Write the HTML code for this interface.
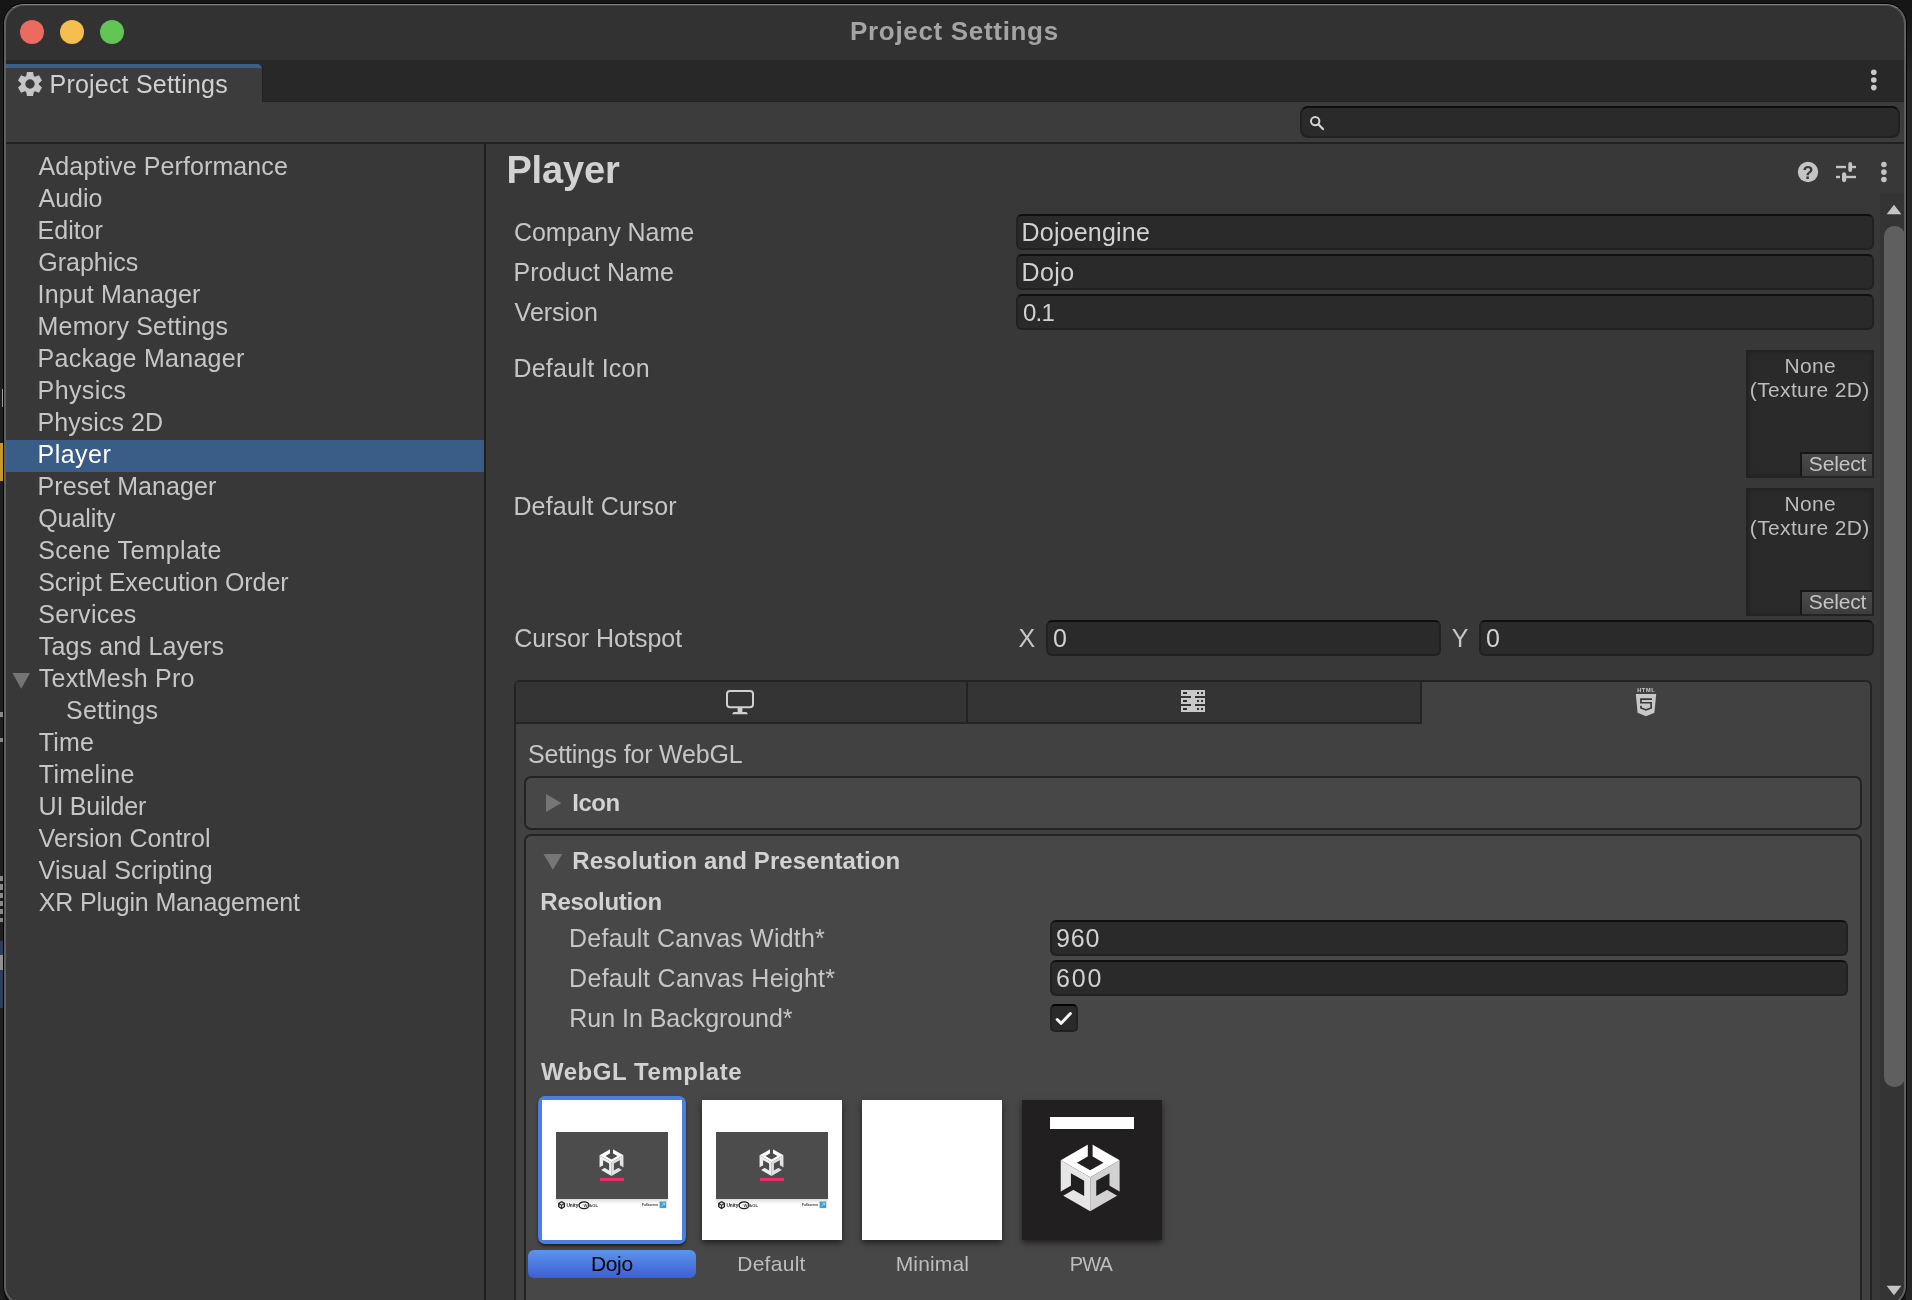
<!DOCTYPE html>
<html><head><meta charset="utf-8"><title>Project Settings</title>
<style>
html,body{margin:0;padding:0}
body{width:1912px;height:1300px;overflow:hidden;position:relative;background:#161616;font-family:"Liberation Sans",sans-serif}
div,svg{position:absolute;box-sizing:border-box}
.t{white-space:nowrap;line-height:32px;height:32px}
#win{left:4px;top:4px;width:1902px;height:1302px;border-radius:20px;overflow:hidden;background:#383838;box-shadow:0 0 0 1px #000}
#in{left:-4px;top:-4px;width:1912px;height:1306px;will-change:transform}
#txt{left:0;top:0;width:1912px;height:1300px;will-change:transform}
#wb{left:4px;top:4px;width:1902px;height:1302px;border-radius:20px;border:2px solid #5f5f5f;border-top:1px solid #828282;box-shadow:inset 0 1px 0 rgba(255,255,255,.11)}
.f{background:#2a2a2a;border:2px solid #212121;border-top-color:#0f0f0f;border-radius:6px}
.tex{background:#2a2a2a;border:2px solid #232323;width:128px;height:128px;box-shadow:inset 0 0 5px rgba(0,0,0,.25)}
.sel{background:linear-gradient(#4a4a4a,#3c3c3c);border:2px solid #171717;border-right:0;border-bottom:0;left:1800px;width:72px;height:24px}
.box{background:#474747;border:2px solid #232323;border-radius:7px}
.sh{box-shadow:0 3px 6px rgba(0,0,0,.55)}

</style></head>
<body>
<!-- outer desktop remnants -->
<div style="left:1906px;top:14px;width:6px;height:1290px;background:linear-gradient(#161616,#252525 60px)"></div>
<div style="left:0;top:30px;width:4px;height:1270px;background:linear-gradient(#161616,#1e1e1e 40px)"></div>
<div style="left:0;top:443px;width:3px;height:38px;background:#c8982e"></div>
<div style="left:2px;top:389px;width:1px;height:18px;background:#a0a0a0"></div>
<div style="left:0;top:712px;width:3px;height:5px;background:#8a8a8a"></div>
<div style="left:0;top:738px;width:3px;height:4px;background:#8a8a8a"></div>
<div style="left:0;top:876px;width:3px;height:5px;background:#8a8a8a"></div>
<div style="left:0;top:884px;width:3px;height:6px;background:#8a8a8a"></div>
<div style="left:0;top:893px;width:3px;height:5px;background:#8a8a8a"></div>
<div style="left:0;top:901px;width:3px;height:5px;background:#8a8a8a"></div>
<div style="left:0;top:909px;width:3px;height:5px;background:#8a8a8a"></div>
<div style="left:0;top:918px;width:3px;height:4px;background:#8a8a8a"></div>
<div style="left:0;top:941px;width:3px;height:67px;background:#2c3e5c"></div>
<div style="left:0;top:955px;width:3px;height:15px;background:#909090"></div>
<div id="win"><div id="in">
<!-- title bar -->
<div style="left:0;top:0;width:1912px;height:60px;background:#323232"></div>
<div style="left:20px;top:20px;width:24px;height:24px;border-radius:50%;background:#ec6b60"></div>
<div style="left:60px;top:20px;width:24px;height:24px;border-radius:50%;background:#f5bf4f"></div>
<div style="left:100px;top:20px;width:24px;height:24px;border-radius:50%;background:#62c655"></div>
<!-- tab bar -->
<div style="left:0;top:60px;width:1912px;height:42px;background:#282828"></div>
<div style="left:4px;top:64px;width:258px;height:40px;background:#3c3c3c;border-top:4px solid #3a5f8c;border-top-right-radius:5px"></div>
<!-- toolbar -->
<div style="left:262px;top:101px;width:1650px;height:1px;background:#222"></div>
<div style="left:262px;top:66px;width:1px;height:36px;background:#1f1f1f"></div>
<div style="left:0;top:102px;width:1912px;height:40px;background:#3c3c3c"></div>
<div style="left:0;top:142px;width:1912px;height:2px;background:#212121"></div>
<div class="f" style="left:1300px;top:106px;width:600px;height:32px;border-radius:8px;border-top-color:#0e0e0e"></div>
<svg style="left:1306px;top:112px" width="22" height="22" viewBox="0 0 22 22"><circle cx="9.2" cy="9.1" r="4.2" fill="none" stroke="#d4d4d4" stroke-width="2"/><path d="M12.3 12.2L17 17.1" stroke="#d4d4d4" stroke-width="2.2" stroke-linecap="round"/></svg>
<!-- gear -->
<svg style="left:17px;top:71px" width="26" height="26" viewBox="0 0 26 26"><defs><mask id="gm"><rect width="26" height="26" fill="#fff"/><path d="M8.3 13a4.7 4.7 0 1 1 9.4 0a4.7 4.7 0 1 1 -9.4 0Z" fill="#000"/></mask></defs><g fill="#c6c6c6" mask="url(#gm)"><path d="M16.90 5.60L16.00 0.90L10.00 0.90L9.10 5.60ZM8.54 5.92L4.02 4.35L1.02 9.55L4.64 12.68ZM4.64 13.32L1.02 16.45L4.02 21.65L8.54 20.08ZM9.10 20.40L10.00 25.10L16.00 25.10L16.90 20.40ZM17.46 20.08L21.98 21.65L24.98 16.45L21.36 13.32ZM21.36 12.68L24.98 9.55L21.98 4.35L17.46 5.92Z"/><path d="M4.1 13a8.9 8.9 0 1 0 17.8 0a8.9 8.9 0 1 0 -17.8 0Z"/></g></svg>
<!-- kebab tabbar -->
<svg style="left:1868px;top:66px" width="12" height="28" viewBox="0 0 12 28"><circle cx="5.8" cy="6.3" r="2.8" fill="#c8c8c8"/><circle cx="5.8" cy="14" r="2.8" fill="#c8c8c8"/><circle cx="5.8" cy="21.6" r="2.8" fill="#c8c8c8"/></svg>
<!-- left panel -->
<div style="left:4px;top:440px;width:480px;height:32px;background:#3a5d88"></div>
<div style="left:484px;top:144px;width:2px;height:1160px;background:#1f1f1f"></div>
<svg style="left:12px;top:672px" width="20" height="18" viewBox="0 0 20 18"><path d="M0.5 1L18 1L9.2 16.8Z" fill="#757575"/></svg>
<!-- right header icons -->
<svg style="left:1796px;top:160px" width="24" height="24" viewBox="0 0 24 24"><circle cx="12" cy="12" r="10.2" fill="#c4c4c4"/><text x="12" y="18.6" font-family="Liberation Sans, sans-serif" font-weight="700" font-size="18" text-anchor="middle" fill="#383838">?</text></svg>
<svg style="left:1834px;top:160px" width="24" height="24" viewBox="0 0 24 24" fill="#c4c4c4"><rect x="2" y="5.8" width="10" height="2.4"/><rect x="18" y="5.8" width="4" height="2.4"/><rect x="14.3" y="2" width="3.8" height="10" rx="1.9"/><rect x="2" y="15.8" width="4" height="2.4"/><rect x="12" y="15.8" width="10" height="2.4"/><rect x="8" y="12.2" width="4.2" height="10" rx="2.1"/></svg>
<svg style="left:1878px;top:158px" width="12" height="28" viewBox="0 0 12 28"><circle cx="5.9" cy="6.5" r="2.8" fill="#c4c4c4"/><circle cx="5.9" cy="14.1" r="2.8" fill="#c4c4c4"/><circle cx="5.9" cy="21.5" r="2.8" fill="#c4c4c4"/></svg>
<!-- scrollbar -->
<div style="left:1880px;top:194px;width:24px;height:1112px;background:#343434"></div>
<svg style="left:1886px;top:204px" width="16" height="11" viewBox="0 0 16 11"><path d="M0.6 10.2L8 0.8L15.4 10.2Z" fill="#c4c4c4"/></svg>
<div style="left:1884px;top:226px;width:21px;height:861px;border-radius:10px;background:#5f5f5f"></div>
<svg style="left:1886px;top:1285px" width="16" height="11" viewBox="0 0 16 11"><path d="M0.6 0.8L15.4 0.8L8 10.2Z" fill="#c4c4c4"/></svg>
<!-- fields -->
<div class="f" style="left:1016px;top:214px;width:858px;height:36px"></div>
<div class="f" style="left:1016px;top:254px;width:858px;height:36px"></div>
<div class="f" style="left:1016px;top:294px;width:858px;height:36px"></div>
<div class="tex" style="left:1746px;top:350px"></div><div class="sel" style="top:452px"></div>
<div class="tex" style="left:1746px;top:488px"></div><div class="sel" style="top:590px"></div>
<div class="f" style="left:1046px;top:620px;width:395px;height:36px"></div>
<div class="f" style="left:1479px;top:620px;width:395px;height:36px"></div>
<!-- platform container -->
<div style="left:514px;top:680px;width:1358px;height:640px;background:#414141;border:2px solid #232323;border-radius:6px 6px 0 0"></div>
<div style="left:516px;top:682px;width:904px;height:40px;background:#343434"></div>
<div style="left:516px;top:722px;width:906px;height:2px;background:#232323"></div>
<div style="left:966px;top:682px;width:2px;height:40px;background:#232323"></div>
<div style="left:1420px;top:682px;width:2px;height:40px;background:#232323"></div>
<!-- monitor icon -->
<svg style="left:724px;top:688px" width="32" height="28" viewBox="0 0 32 28"><rect x="3" y="3" width="26" height="16.2" rx="3" fill="none" stroke="#d0d0d0" stroke-width="2"/><rect x="13.6" y="20" width="4.8" height="4.4" fill="#d0d0d0"/><path d="M8 26.2L9.5 24L22.5 24L24 26.2Z" fill="#d0d0d0"/></svg>
<!-- server icon -->
<svg style="left:1181px;top:690px" width="24" height="22" viewBox="0 0 24 22" shape-rendering="crispEdges"><g fill="#c8c8c8"><rect x="0" y="0" width="24" height="6"/><rect x="0" y="8" width="24" height="6"/><rect x="0" y="16" width="24" height="6"/><rect x="10" y="0" width="4" height="22"/></g><g fill="#2c2c2c"><rect x="2" y="2" width="4" height="2"/><rect x="16" y="2" width="2" height="2"/><rect x="20" y="2" width="2" height="2"/><rect x="2" y="10" width="4" height="2"/><rect x="16" y="10" width="2" height="2"/><rect x="20" y="10" width="2" height="2"/><rect x="2" y="18" width="4" height="2"/><rect x="16" y="18" width="2" height="2"/><rect x="20" y="18" width="2" height="2"/></g></svg>
<!-- html5 icon -->
<svg style="left:1634px;top:686px" width="24" height="32" viewBox="0 0 24 32"><text x="12.2" y="6.3" font-family="Liberation Sans, sans-serif" font-weight="700" font-size="5.6" text-anchor="middle" fill="#d0d0d0" letter-spacing="0.62">HTML</text><path d="M1.8 8L22.2 8L20.4 26.8L12 30.2L3.6 26.8Z" fill="#c8c8c8"/><path d="M6.1 12.2L18 12.2L18 13.9L7.8 13.9L7.8 15.9L18 15.9L18 22.6L12 24.7L6.1 22.6L6.1 19.7L7.8 19.7L7.8 21.5L12 23L16.3 21.5L16.3 17.6L6.1 17.6Z" fill="#3a3a3a"/></svg>
<!-- sections -->
<div class="box" style="left:524px;top:776px;width:1338px;height:54px"></div>
<div class="box" style="left:524px;top:834px;width:1338px;height:500px"></div>
<svg style="left:544px;top:793px" width="18" height="20" viewBox="0 0 18 20"><path d="M2 1L17.4 10L2 19Z" fill="#767676"/></svg>
<svg style="left:543px;top:853px" width="20" height="18" viewBox="0 0 20 18"><path d="M0.4 1L19.3 1L9.85 16.8Z" fill="#767676"/></svg>
<div class="f" style="left:1050px;top:920px;width:798px;height:36px"></div>
<div class="f" style="left:1050px;top:960px;width:798px;height:36px"></div>
<div class="f" style="left:1050px;top:1004px;width:28px;height:28px;border-radius:5px;border-top-color:#050505"></div>
<svg style="left:1053px;top:1007px" width="22" height="22" viewBox="0 0 22 22"><path d="M4.2 12.5L8.2 16.3L17.4 6.5" fill="none" stroke="#f6f6f6" stroke-width="3" stroke-linecap="round" stroke-linejoin="round"/></svg>
<!-- templates -->
<div style="left:538px;top:1096px;width:148px;height:148px;background:#4a7ee0;border-radius:7px;box-shadow:0 2px 3px rgba(0,0,0,.6)"></div>
<div style="left:542px;top:1100px;width:140px;height:140px;background:#fff"></div>
<div class="sh" style="left:702px;top:1100px;width:140px;height:140px;background:#fff"></div>
<div class="sh" style="left:862px;top:1100px;width:140px;height:140px;background:#fff"></div>
<div class="sh" style="left:1022px;top:1100px;width:140px;height:140px;background:#221f20"></div>
<div style="left:528px;top:1250px;width:168px;height:28px;border-radius:6px;background:linear-gradient(#5c95ee,#3d5fd2)"></div>
<div style="left:556.2px;top:1199px;width:111.7px;height:5px;background:linear-gradient(#dcdcdc,#ffffff)"></div>
<div style="left:556.2px;top:1131.8px;width:111.7px;height:67.6px;background:#4c4c4c"></div>
<div style="left:600px;top:1177.6px;width:24.2px;height:3.4px;background:#ee2d68"></div>
<svg style="left:596px;top:1144px" width="34" height="36" viewBox="0 0 34 36"><path d="M3.55 11.30L15.50 4.40L27.45 11.30L15.50 18.20Z" fill="#ffffff"/><path d="M27.45 11.30L27.45 25.10L15.50 32.00L15.50 18.20Z" fill="#e2e2e2"/><path d="M15.50 32.00L3.55 25.10L3.55 11.30L15.50 18.20Z" fill="#f0f0f0"/><path d="M9.52 11.99L15.50 8.54L21.48 11.99L15.50 15.44ZM13.98 11.99L13.98 2.40L17.02 2.40L17.02 11.99Z" fill="#4c4c4c"/><path d="M23.87 16.13L23.87 23.03L17.89 26.48L17.89 19.58ZM21.64 19.99L29.94 24.79L28.42 27.41L20.12 22.62Z" fill="#4c4c4c"/><path d="M13.11 26.48L7.13 23.03L7.13 16.13L13.11 19.58ZM10.88 22.62L2.58 27.41L1.06 24.79L9.36 19.99Z" fill="#4c4c4c"/></svg>
<svg style="left:556px;top:1199px" width="114" height="12" viewBox="0 0 114 12"><path d="M5.6 1.9L9.1 3.9L9.1 8L5.6 10.2L2.1 8L2.1 3.9Z" fill="#222"/><path d="M5.6 3.4L7.6 4.6L5.6 5.8L3.6 4.6ZM5.2 6.6L5.2 8.6L3.4 7.5L3.4 5.6ZM6 6.6L7.8 5.6L7.8 7.5L6 8.6Z" fill="#d8d8d8"/><text x="10.4" y="8.1" font-family="Liberation Sans, sans-serif" font-weight="700" font-size="4.8" fill="#262626">Unity</text><ellipse cx="28" cy="6.3" rx="5" ry="3.4" fill="none" stroke="#1c1c1c" stroke-width="1.3"/><text x="27.6" y="8" font-family="Liberation Sans, sans-serif" font-weight="700" font-size="4.2" fill="#444">WebGL</text><text x="86" y="7.2" font-family="Liberation Sans, sans-serif" font-weight="700" font-size="3.2" fill="#333">Fullscreen</text><rect x="103.6" y="2.5" width="6.6" height="6.6" fill="#3d9fd6"/><path d="M105.4 7.4L108.4 4.4M106.6 4.2h2v2" stroke="#cfe8f6" stroke-width="0.7" fill="none"/></svg>
<div style="left:716.2px;top:1199px;width:111.7px;height:5px;background:linear-gradient(#dcdcdc,#ffffff)"></div>
<div style="left:716.2px;top:1131.8px;width:111.7px;height:67.6px;background:#4c4c4c"></div>
<div style="left:760px;top:1177.6px;width:24.2px;height:3.4px;background:#ee2d68"></div>
<svg style="left:756px;top:1144px" width="34" height="36" viewBox="0 0 34 36"><path d="M3.55 11.30L15.50 4.40L27.45 11.30L15.50 18.20Z" fill="#ffffff"/><path d="M27.45 11.30L27.45 25.10L15.50 32.00L15.50 18.20Z" fill="#e2e2e2"/><path d="M15.50 32.00L3.55 25.10L3.55 11.30L15.50 18.20Z" fill="#f0f0f0"/><path d="M9.52 11.99L15.50 8.54L21.48 11.99L15.50 15.44ZM13.98 11.99L13.98 2.40L17.02 2.40L17.02 11.99Z" fill="#4c4c4c"/><path d="M23.87 16.13L23.87 23.03L17.89 26.48L17.89 19.58ZM21.64 19.99L29.94 24.79L28.42 27.41L20.12 22.62Z" fill="#4c4c4c"/><path d="M13.11 26.48L7.13 23.03L7.13 16.13L13.11 19.58ZM10.88 22.62L2.58 27.41L1.06 24.79L9.36 19.99Z" fill="#4c4c4c"/></svg>
<svg style="left:716px;top:1199px" width="114" height="12" viewBox="0 0 114 12"><path d="M5.6 1.9L9.1 3.9L9.1 8L5.6 10.2L2.1 8L2.1 3.9Z" fill="#222"/><path d="M5.6 3.4L7.6 4.6L5.6 5.8L3.6 4.6ZM5.2 6.6L5.2 8.6L3.4 7.5L3.4 5.6ZM6 6.6L7.8 5.6L7.8 7.5L6 8.6Z" fill="#d8d8d8"/><text x="10.4" y="8.1" font-family="Liberation Sans, sans-serif" font-weight="700" font-size="4.8" fill="#262626">Unity</text><ellipse cx="28" cy="6.3" rx="5" ry="3.4" fill="none" stroke="#1c1c1c" stroke-width="1.3"/><text x="27.6" y="8" font-family="Liberation Sans, sans-serif" font-weight="700" font-size="4.2" fill="#444">WebGL</text><text x="86" y="7.2" font-family="Liberation Sans, sans-serif" font-weight="700" font-size="3.2" fill="#333">Fullscreen</text><rect x="103.6" y="2.5" width="6.6" height="6.6" fill="#3d9fd6"/><path d="M105.4 7.4L108.4 4.4M106.6 4.2h2v2" stroke="#cfe8f6" stroke-width="0.7" fill="none"/></svg>
<div style="left:1050.2px;top:1117.3px;width:83.7px;height:11.3px;background:#ffffff"></div>
<svg style="left:1050px;top:1136px" width="80" height="82" viewBox="0 0 80 82"><path d="M10.76 24.30L40.20 7.30L69.64 24.30L40.20 41.30Z" fill="#ffffff"/><path d="M69.64 24.30L69.64 58.30L40.20 75.30L40.20 41.30Z" fill="#d2d2d2"/><path d="M40.20 75.30L10.76 58.30L10.76 24.30L40.20 41.30Z" fill="#e6e6e6"/><path d="M26.95 26.68L40.20 19.03L53.45 26.68L40.20 34.33ZM37.79 26.68L37.79 5.30L42.61 5.30L42.61 26.68Z" fill="#221f20"/><path d="M59.49 37.14L59.49 52.43L46.24 60.08L46.24 44.78ZM54.07 46.52L72.58 57.21L70.17 61.39L51.65 50.70Z" fill="#221f20"/><path d="M34.16 60.08L20.91 52.44L20.91 37.14L34.16 44.78ZM28.75 50.70L10.23 61.39L7.82 57.21L26.33 46.52Z" fill="#221f20"/></svg>
</div></div>
<div id="wb"></div>

<div id="txt">
<div class="t" style="left:38.6px;top:150px;font-size:25px;font-weight:400;color:#c6c6c6;letter-spacing:0.10px;">Adaptive Performance</div>
<div class="t" style="left:38.6px;top:182px;font-size:25px;font-weight:400;color:#c6c6c6;letter-spacing:-0.03px;">Audio</div>
<div class="t" style="left:37.6px;top:214px;font-size:25px;font-weight:400;color:#c6c6c6;letter-spacing:-0.02px;">Editor</div>
<div class="t" style="left:38.2px;top:246px;font-size:25px;font-weight:400;color:#c6c6c6;letter-spacing:0.01px;">Graphics</div>
<div class="t" style="left:37.6px;top:278px;font-size:25px;font-weight:400;color:#c6c6c6;letter-spacing:0.13px;">Input Manager</div>
<div class="t" style="left:37.6px;top:310px;font-size:25px;font-weight:400;color:#c6c6c6;letter-spacing:0.20px;">Memory Settings</div>
<div class="t" style="left:37.6px;top:342px;font-size:25px;font-weight:400;color:#c6c6c6;letter-spacing:0.27px;">Package Manager</div>
<div class="t" style="left:37.6px;top:374px;font-size:25px;font-weight:400;color:#c6c6c6;letter-spacing:0.38px;">Physics</div>
<div class="t" style="left:37.6px;top:406px;font-size:25px;font-weight:400;color:#c6c6c6;letter-spacing:0.05px;">Physics 2D</div>
<div class="t" style="left:37.6px;top:438px;font-size:25px;font-weight:400;color:#ffffff;letter-spacing:0.45px;">Player</div>
<div class="t" style="left:37.6px;top:470px;font-size:25px;font-weight:400;color:#c6c6c6;letter-spacing:0.06px;">Preset Manager</div>
<div class="t" style="left:38.2px;top:502px;font-size:25px;font-weight:400;color:#c6c6c6;letter-spacing:-0.08px;">Quality</div>
<div class="t" style="left:38.2px;top:534px;font-size:25px;font-weight:400;color:#c6c6c6;letter-spacing:0.34px;">Scene Template</div>
<div class="t" style="left:38.2px;top:566px;font-size:25px;font-weight:400;color:#c6c6c6;letter-spacing:-0.05px;">Script Execution Order</div>
<div class="t" style="left:38.2px;top:598px;font-size:25px;font-weight:400;color:#c6c6c6;letter-spacing:0.33px;">Services</div>
<div class="t" style="left:38.8px;top:630px;font-size:25px;font-weight:400;color:#c6c6c6;letter-spacing:0.13px;">Tags and Layers</div>
<div class="t" style="left:38.8px;top:662px;font-size:25px;font-weight:400;color:#c6c6c6;letter-spacing:0.26px;">TextMesh Pro</div>
<div class="t" style="left:66.0px;top:694px;font-size:25px;font-weight:400;color:#c6c6c6;letter-spacing:0.24px;">Settings</div>
<div class="t" style="left:38.8px;top:726px;font-size:25px;font-weight:400;color:#c6c6c6;letter-spacing:0.16px;">Time</div>
<div class="t" style="left:38.8px;top:758px;font-size:25px;font-weight:400;color:#c6c6c6;letter-spacing:0.28px;">Timeline</div>
<div class="t" style="left:38.6px;top:790px;font-size:25px;font-weight:400;color:#c6c6c6;letter-spacing:-0.23px;">UI Builder</div>
<div class="t" style="left:38.6px;top:822px;font-size:25px;font-weight:400;color:#c6c6c6;letter-spacing:0.07px;">Version Control</div>
<div class="t" style="left:38.6px;top:854px;font-size:25px;font-weight:400;color:#c6c6c6;letter-spacing:0.14px;">Visual Scripting</div>
<div class="t" style="left:38.8px;top:886px;font-size:25px;font-weight:400;color:#c6c6c6;letter-spacing:-0.15px;">XR Plugin Management</div>
<div class="t" style="left:850.0px;top:15px;font-size:26px;font-weight:700;color:#a4a4a4;letter-spacing:0.68px;">Project Settings</div>
<div class="t" style="left:49.5px;top:68px;font-size:25px;font-weight:400;color:#d0d0d0;letter-spacing:0.21px;">Project Settings</div>
<div class="t" style="left:506.4px;top:154px;font-size:38px;font-weight:700;color:#d2d2d2;letter-spacing:-0.12px;">Player</div>
<div class="t" style="left:514.0px;top:216px;font-size:25px;font-weight:400;color:#c6c6c6;letter-spacing:-0.05px;">Company Name</div>
<div class="t" style="left:513.4px;top:256px;font-size:25px;font-weight:400;color:#c6c6c6;letter-spacing:0.06px;">Product Name</div>
<div class="t" style="left:514.6px;top:296px;font-size:25px;font-weight:400;color:#c6c6c6;letter-spacing:-0.01px;">Version</div>
<div class="t" style="left:513.4px;top:352px;font-size:25px;font-weight:400;color:#c6c6c6;letter-spacing:0.26px;">Default Icon</div>
<div class="t" style="left:513.4px;top:490px;font-size:25px;font-weight:400;color:#c6c6c6;letter-spacing:0.16px;">Default Cursor</div>
<div class="t" style="left:514.2px;top:622px;font-size:25px;font-weight:400;color:#c6c6c6;letter-spacing:-0.01px;">Cursor Hotspot</div>
<div class="t" style="left:1021.5px;top:216px;font-size:25px;font-weight:400;color:#d2d2d2;letter-spacing:0.21px;">Dojoengine</div>
<div class="t" style="left:1021.5px;top:256px;font-size:25px;font-weight:400;color:#d2d2d2;letter-spacing:0.40px;">Dojo</div>
<div class="t" style="left:1023.0px;top:297px;font-size:24px;font-weight:400;color:#d2d2d2;letter-spacing:-0.80px;">0.1</div>
<div class="t" style="left:1018.6px;top:622px;font-size:25px;font-weight:400;color:#c6c6c6;letter-spacing:0.00px;">X</div>
<div class="t" style="left:1052.9px;top:622px;font-size:25px;font-weight:400;color:#d2d2d2;letter-spacing:0.00px;">0</div>
<div class="t" style="left:1451.7px;top:622px;font-size:25px;font-weight:400;color:#c6c6c6;letter-spacing:0.00px;">Y</div>
<div class="t" style="left:1486.0px;top:622px;font-size:25px;font-weight:400;color:#d2d2d2;letter-spacing:0.00px;">0</div>
<div class="t" style="left:1784.4px;top:350px;font-size:21px;font-weight:400;color:#bcbcbc;letter-spacing:0.36px;">None</div>
<div class="t" style="left:1749.8px;top:374px;font-size:21px;font-weight:400;color:#bcbcbc;letter-spacing:0.36px;">(Texture 2D)</div>
<div class="t" style="left:1808.8px;top:448px;font-size:21px;font-weight:400;color:#c4c4c4;letter-spacing:-0.17px;">Select</div>
<div class="t" style="left:1784.4px;top:488px;font-size:21px;font-weight:400;color:#bcbcbc;letter-spacing:0.36px;">None</div>
<div class="t" style="left:1749.8px;top:512px;font-size:21px;font-weight:400;color:#bcbcbc;letter-spacing:0.36px;">(Texture 2D)</div>
<div class="t" style="left:1808.8px;top:586px;font-size:21px;font-weight:400;color:#c4c4c4;letter-spacing:-0.17px;">Select</div>
<div class="t" style="left:528.0px;top:738px;font-size:25px;font-weight:400;color:#c6c6c6;letter-spacing:-0.18px;">Settings for WebGL</div>
<div class="t" style="left:572.3px;top:787px;font-size:24px;font-weight:700;color:#d2d2d2;letter-spacing:-0.53px;">Icon</div>
<div class="t" style="left:572.3px;top:845px;font-size:24px;font-weight:700;color:#d2d2d2;letter-spacing:0.10px;">Resolution and Presentation</div>
<div class="t" style="left:540.3px;top:886px;font-size:24px;font-weight:700;color:#d2d2d2;letter-spacing:-0.25px;">Resolution</div>
<div class="t" style="left:569.1px;top:922px;font-size:25px;font-weight:400;color:#c6c6c6;letter-spacing:0.21px;">Default Canvas Width*</div>
<div class="t" style="left:569.1px;top:962px;font-size:25px;font-weight:400;color:#c6c6c6;letter-spacing:0.29px;">Default Canvas Height*</div>
<div class="t" style="left:569.3px;top:1002px;font-size:25px;font-weight:400;color:#c6c6c6;letter-spacing:-0.03px;">Run In Background*</div>
<div class="t" style="left:1056.1px;top:922px;font-size:25px;font-weight:400;color:#d2d2d2;letter-spacing:0.75px;">960</div>
<div class="t" style="left:1056.1px;top:962px;font-size:25px;font-weight:400;color:#d2d2d2;letter-spacing:1.75px;">600</div>
<div class="t" style="left:540.9px;top:1056px;font-size:24px;font-weight:700;color:#d2d2d2;letter-spacing:0.56px;">WebGL Template</div>
<div class="t" style="left:590.9px;top:1248px;font-size:21px;font-weight:400;color:#000000;letter-spacing:-0.34px;">Dojo</div>
<div class="t" style="left:737.2px;top:1248px;font-size:21px;font-weight:400;color:#bdbdbd;letter-spacing:0.28px;">Default</div>
<div class="t" style="left:895.7px;top:1248px;font-size:21px;font-weight:400;color:#bdbdbd;letter-spacing:0.14px;">Minimal</div>
<div class="t" style="left:1069.7px;top:1248px;font-size:20px;font-weight:400;color:#bdbdbd;letter-spacing:-0.80px;">PWA</div>
</div>
</body></html>
